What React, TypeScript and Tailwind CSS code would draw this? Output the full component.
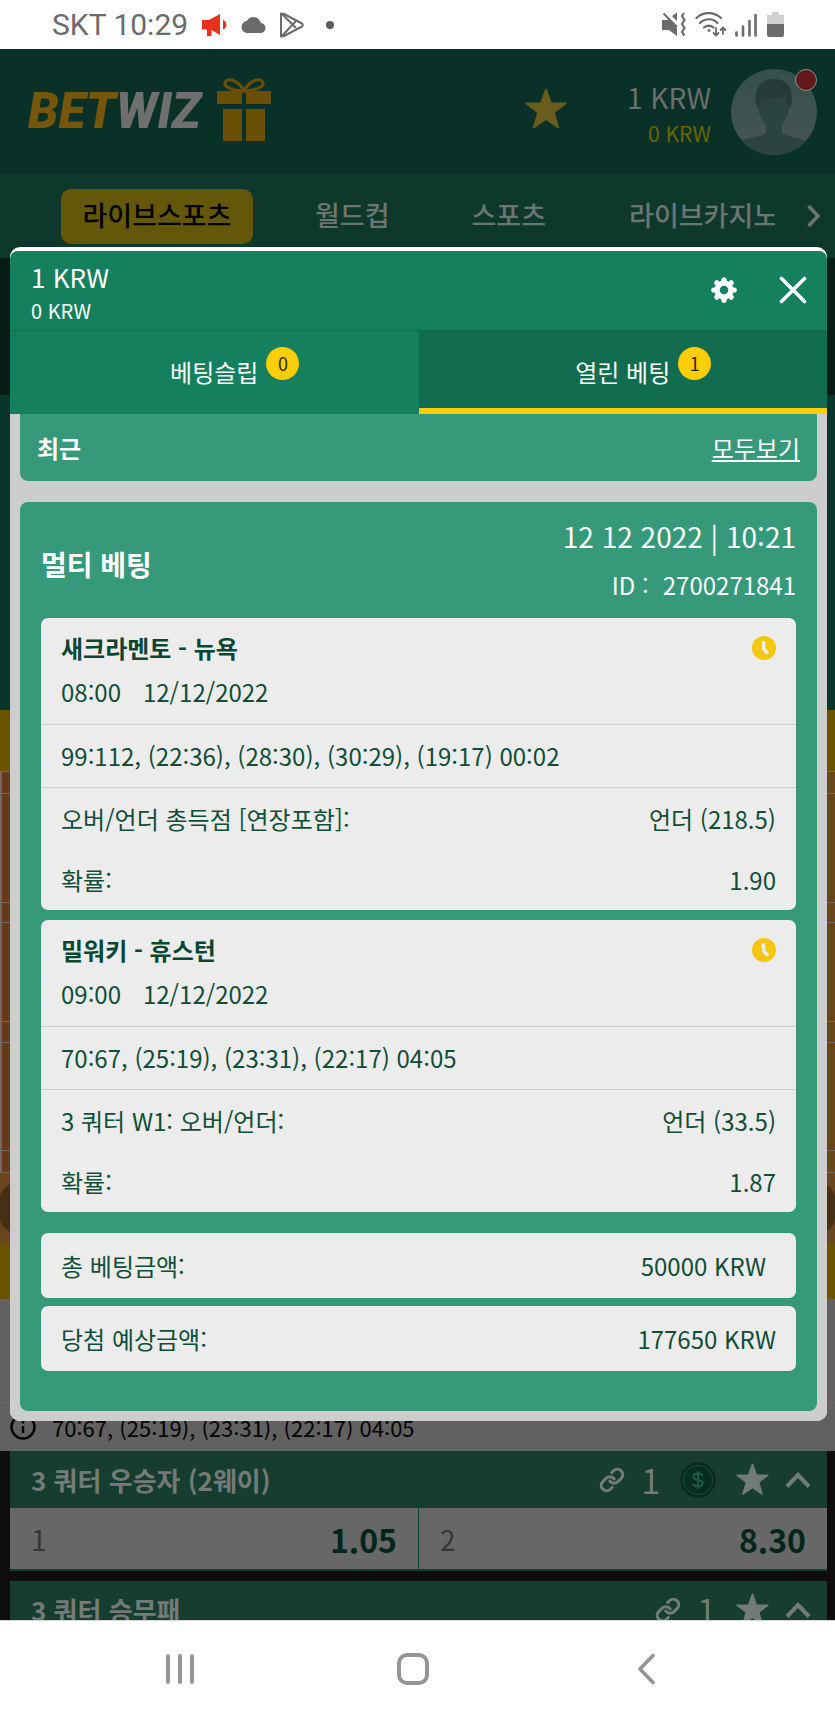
import { useState } from 'react';
import { MdCloud } from 'react-icons/md';
import { Link } from 'lucide-react';

interface Leg {
  id: string;
  teams: string;
  time: string;
  date: string;
  score: string;
  market: string;
  pick: string;
  odds: string;
}

const LEGS: Leg[] = [
  {
    id: 'sac-nyk',
    teams: '새크라멘토 - 뉴욕',
    time: '08:00',
    date: '12/12/2022',
    score: '99:112, (22:36), (28:30), (30:29), (19:17) 00:02',
    market: '오버/언더 총득점 [연장포함]:',
    pick: '언더 (218.5)',
    odds: '1.90',
  },
  {
    id: 'mil-hou',
    teams: '밀워키 - 휴스턴',
    time: '09:00',
    date: '12/12/2022',
    score: '70:67, (25:19), (23:31), (22:17) 04:05',
    market: '3 쿼터 W1: 오버/언더:',
    pick: '언더 (33.5)',
    odds: '1.87',
  },
];

const COURT_ROWS = ['h-[22px]', 'h-[109px]', 'h-5', 'h-[99px]', 'h-[21px]', 'h-[108px]', 'h-[22px]'];

function StarIcon({ className }: { className?: string }) {
  return (
    <svg viewBox="0 0 24 24" className={className} fill="currentColor" stroke="currentColor" strokeWidth="1" strokeLinejoin="round">
      <path d="M12 .8l2.8 8h8.500l-6.800 5.200 2.500 8.600L12 17.700 5 22.600 7.500 14 .7 8.800h8.500z" />
    </svg>
  );
}

function GearIcon() {
  return (
    <svg viewBox="0 0 26 26" className="w-[26px] h-[26px]" fill="none" stroke="currentColor">
      <circle cx="13" cy="13" r="7" strokeWidth="5.400" />
      <g strokeWidth="5.200" strokeLinecap="round">
        {[0, 45, 90, 135, 180, 225, 270, 315].map((a) => (
          <path key={a} d="M13 2.800v2" transform={`rotate(${a} 13 13)`} />
        ))}
      </g>
    </svg>
  );
}

function ClockIcon() {
  return (
    <svg viewBox="0 0 24 24" className="w-6 h-6 shrink-0">
      <circle cx="12" cy="12" r="12" fill="#f4c70d" />
      <path d="M11.500 6.500l.3 6.500 3.200 3.500" fill="none" stroke="#ececec" strokeWidth="3.600" strokeLinecap="round" strokeLinejoin="round" />
    </svg>
  );
}

function GiftIcon() {
  return (
    <svg viewBox="0 0 54 64" className="w-[54px] h-16" fill="#6a4f07">
      <path d="M0 13h25v13H0zM29 13h25v13H29zM6 31h19v32H6zM29 31h19v32H29z" />
      <g fill="none" stroke="#6a4f07" strokeWidth="3">
        <path d="M27 13C22 3 13 0 9 3c-4 4 2 9 18 10z" />
        <path d="M27 13c5-10 14-13 18-10 4 4-2 9-18 10z" />
      </g>
    </svg>
  );
}

function StatusBar() {
  return (
    <div className="h-[49px] shrink-0 bg-white flex items-center justify-between pl-[52px] pr-[51px] text-[#6b6b6b]">
      <div className="flex items-center">
        <span className="font-['Roboto',sans-serif] text-[30px] leading-8">SKT 10:29</span>
        <svg viewBox="0 0 26 24" className="ml-3.5 w-[26px] h-6" fill="#e8301c">
          <path d="M0 7h7L18 1v21L9.500 17v6H5v-6.500H0z" />
          <path d="M21 7c4.500 1 4.500 8.500 0 9.500z" />
        </svg>
        <MdCloud className="ml-3 w-[27px] h-[24px]" />
        <svg viewBox="0 0 25 26" className="ml-3 w-[25px] h-[26px]" fill="none" stroke="currentColor" strokeWidth="2" strokeLinejoin="round">
          <path d="M2 1.500v23l3-.5 18-9.500c1-.7 1-2.300 0-3L5 2z" />
          <path d="M3 2l14 14M3 24L17 9" />
        </svg>
        <span className="ml-[22px] w-2 h-2 rounded-full bg-[#5c5c5c]" />
      </div>
      <div className="flex items-center">
        <svg viewBox="0 0 25 25" className="w-[25px] h-[25px]" fill="currentColor">
          <path d="M0 8h5l2-1 8 9v8l-8-6H0z" />
          <path d="M10 4l5-3.500V9z" />
          <path d="M1.500 1.500L15 15" stroke="currentColor" strokeWidth="2" />
          <path d="M22 1l-2 3 2.500 4-2.500 4 2.500 4-2.500 4 2.500 3.500" fill="none" stroke="currentColor" strokeWidth="2.200" />
        </svg>
        <svg viewBox="0 0 32 25" className="ml-2 w-8 h-[25px]" fill="none" stroke="currentColor" strokeWidth="2.200" strokeLinecap="round">
          <path d="M1.500 6C8-.5 19-.5 26 6M5 11c5-5 13-5 17.500 0M9 15.500c3-2.500 6.500-2.500 9.500 0" />
          <circle cx="14" cy="18.500" r="1" fill="currentColor" strokeWidth="1" />
          <path d="M21 16v7M18.500 21l2.500 2.500 2.500-2.500M28 22v-6M25.500 18l2.500-2.500 2.500 2.500" strokeWidth="1.800" />
        </svg>
        <svg viewBox="0 0 22 24" className="ml-2 w-[22px] h-6" fill="none" stroke="currentColor" strokeWidth="2.600" strokeLinecap="round">
          <path d="M1.500 19.500v3M8 13.500v9M14.500 8v14.500M20.500 2v20.500" />
        </svg>
        <svg viewBox="0 0 17 25" className="ml-2.5 w-[17px] h-[25px]">
          <path d="M5 0h7v3H17v10H0V3h5z" fill="#d0d0d0" />
          <path d="M0 12h17v11a2 2 0 0 1-2 2H2a2 2 0 0 1-2-2z" fill="#6b6b6b" />
        </svg>
      </div>
    </div>
  );
}

function SiteHeader() {
  return (
    <header className="h-[125px] shrink-0 bg-[#0a3127] flex items-center justify-between pl-7 pr-[18px]">
      <div className="flex items-center">
        <a href="#home" className="font-['Roboto',sans-serif] font-black italic text-[49px] leading-[48px] text-[#76560b]">
          BET<span className="text-[#6f6f6f]">WIZ</span>
        </a>
        <a href="#gifts" aria-label="Gifts" className="ml-4 pb-1"><GiftIcon /></a>
      </div>
      <div className="flex items-center">
        <button aria-label="Favourites" className="mr-[60px] pb-1.5 text-[#6a5c1d]">
          <StarIcon className="w-[42px] h-[42px]" />
        </button>
        <div className="pt-1 text-right">
          <p className="text-[28px] leading-[38px] text-[#6b6f6d]">1 KRW</p>
          <p className="text-[21px] leading-[34px] text-[#6b6400]">0 KRW</p>
        </div>
        <button aria-label="Account" className="relative ml-5">
          <svg viewBox="0 0 86 86" className="w-[86px] h-[86px]">
            <defs>
              <linearGradient id="avatarBg" x1="0" y1="0" x2="0" y2="1">
                <stop offset="0" stopColor="#35504c" />
                <stop offset="1" stopColor="#475553" />
              </linearGradient>
              <clipPath id="avatarClip"><circle cx="43" cy="43" r="43" /></clipPath>
            </defs>
            <g clipPath="url(#avatarClip)">
              <rect width="86" height="86" fill="url(#avatarBg)" />
              <path d="M28 25h30l1 12c-1 8-5 14-8 19v8c6 5 18 4 26 9v13H8V73c8-5 21-4 27-9v-8c-4-5-8-11-8-19z" fill="#2c4441" />
              <path d="M25 36c-2-15 3-26 18-26s20 11 17 27l-3 2c0-5-1-9-3-12-7 2-15 2-22 0-3 3-4 7-4 12z" fill="#263a37" />
            </g>
          </svg>
          <span className="absolute top-0 right-0 w-[22px] h-[22px] rounded-full bg-[#64191b] border border-[#8b8f8d]" />
        </button>
      </div>
    </header>
  );
}

function SiteNav() {
  return (
    <nav className="h-[84px] shrink-0 bg-[#0e382b] flex items-center pl-[61px] pr-3 text-[27px] font-medium leading-[51px] text-[#6c7571]">
      <a href="#live" className="w-48 shrink-0 pb-1 text-center rounded-[10px] bg-[#65570a] text-black">라이브스포츠</a>
      <a href="#worldcup" className="ml-[62px] pb-1 shrink-0">월드컵</a>
      <a href="#sports" className="ml-[82px] pb-1 shrink-0">스포츠</a>
      <a href="#casino" className="ml-[83px] mr-[30px] pb-1 flex-1 min-w-0 overflow-hidden whitespace-nowrap">라이브카지노</a>
      <button aria-label="Next">
        <svg viewBox="0 0 18 24" className="w-[18px] h-6" fill="none" stroke="currentColor" strokeWidth="3.600">
          <path d="M3.500 2L13 12 3.500 22" />
        </svg>
      </button>
    </nav>
  );
}

function CourtView() {
  return (
    <>
      <div className="h-[137px] shrink-0 bg-[#051d15]" />
      <div className="h-[315px] shrink-0 bg-[#09352a]" />
      <div className="h-[61px] shrink-0 bg-[#6a5400]" />
      <div className="shrink-0 border-t border-l-2 border-[#75695e] bg-linear-to-r from-[#673919] to-[#694619]">
        {COURT_ROWS.map((h, i) => (
          <div key={i} className={`${h} border-b border-[#75695e]`} />
        ))}
      </div>
      <div className="h-[70px] shrink-0 bg-[#69461d] flex items-center">
        <div className="w-full h-[50px] rounded-2xl bg-[#463015]" />
      </div>
      <div className="h-14 shrink-0 bg-[#6a5400]" />
      <div className="h-[104px] shrink-0 bg-[#616161] border-b border-[#6b6b6b]" />
      <div className="h-12 shrink-0 bg-[#616161] flex items-center gap-4 pl-2.5 text-[22px] leading-8 text-black">
        <svg viewBox="0 0 26 26" className="w-[26px] h-[26px]" fill="none" stroke="currentColor" strokeWidth="2.400">
          <circle cx="13" cy="13" r="11.500" />
          <path d="M13 12v7M13 7v2.500" />
        </svg>
        <span>70:67, (25:19), (23:31), (22:17) 04:05</span>
      </div>
    </>
  );
}

function MarketHeader({ title, cashout }: { title: string; cashout?: boolean }) {
  return (
    <div className="h-[57px] shrink-0 bg-[#173d30] flex items-center pl-[21px] pr-4 text-[#737b78]">
      <h3 className="flex-1 text-[26px] font-bold leading-10">{title}</h3>
      <Link className="w-[26px] h-[26px]" strokeWidth={2.8} />
      <span className="ml-4 text-[34px] leading-10">1</span>
      {cashout && (
        <svg viewBox="0 0 36 36" className="ml-5 w-9 h-9">
          <circle cx="18" cy="18" r="17" fill="#062d21" stroke="#0a2a20" strokeWidth="1.500" />
          <circle cx="18" cy="18" r="14.500" fill="none" stroke="#1b4a3b" strokeWidth="1" />
          <path d="M22.500 14c-.8-2-2.500-2.500-4.500-2.500-2.500 0-4.500 1-4.500 3.200 0 4.800 9.200 2 9.200 6.600 0 2.200-2 3.200-4.700 3.200-2.300 0-4.200-.8-4.800-2.800M18 9v18" fill="none" stroke="#1f5a48" strokeWidth="2" />
        </svg>
      )}
      <button aria-label="Add to favourites" className="ml-5">
        <StarIcon className="w-[33px] h-[33px]" />
      </button>
      <button aria-label="Collapse" className="ml-4">
        <svg viewBox="0 0 26 18" className="w-[26px] h-[18px]" fill="none" stroke="currentColor" strokeWidth="4">
          <path d="M2 15.500L13 4l11 11.500" />
        </svg>
      </button>
    </div>
  );
}

function OddsButton({ name, value }: { name: string; value: string }) {
  return (
    <button className="flex-1 h-[61px] bg-[#676767] flex items-center justify-between px-[21px]">
      <span className="text-[28px] leading-10 text-[#363636]">{name}</span>
      <span className="text-[32px] font-bold leading-10 text-[#03251a]">{value}</span>
    </button>
  );
}

function Markets() {
  return (
    <section className="bg-[#0f0d0e] pl-2.5 pr-2 flex flex-col gap-2.5">
      <div>
        <MarketHeader title="3 쿼터 우승자 (2웨이)" cashout />
        <div className="flex gap-px bg-[#0f4232] pb-0.5">
          <OddsButton name="1" value="1.05" />
          <OddsButton name="2" value="8.30" />
        </div>
      </div>
      <MarketHeader title="3 쿼터 승무패" />
    </section>
  );
}

interface TabProps {
  label: string;
  count: number;
  active: boolean;
  onClick: () => void;
}

function SlipTab({ label, count, active, onClick }: TabProps) {
  return (
    <button
      role="tab"
      aria-selected={active}
      onClick={onClick}
      className={`flex-1 h-[83px] border-b-[6px] flex items-start justify-center pt-4 text-2xl leading-[50px] ${
        active ? 'bg-[#126c4f] border-[#fdce07]' : 'bg-[#15805d] border-[#15805d]'
      }`}
    >
      <span className="relative">
        {label}
        <span className="absolute top-0 left-full ml-2 w-[33px] h-[33px] rounded-full bg-[#fdce07] text-[#2d2400] text-lg leading-8">
          {count}
        </span>
      </span>
    </button>
  );
}

function LegCard({ leg }: { leg: Leg }) {
  return (
    <article className="rounded-[7px] bg-[#ececec] text-2xl text-[#104e37]">
      <div className="pt-2 pb-2.5 px-5 border-b border-[#cbcbcb] leading-[44px]">
        <div className="flex items-center justify-between">
          <h3 className="font-bold text-[#0a4630]">{leg.teams}</h3>
          <ClockIcon />
        </div>
        <p className="flex gap-[22px]">
          <span>{leg.time}</span>
          <span>{leg.date}</span>
        </p>
      </div>
      <p className="px-5 border-b border-[#cbcbcb] leading-[62px]">{leg.score}</p>
      <dl className="px-5 leading-[61px]">
        <div className="flex justify-between">
          <dt>{leg.market}</dt>
          <dd>{leg.pick}</dd>
        </div>
        <div className="flex justify-between">
          <dt>확률:</dt>
          <dd>{leg.odds}</dd>
        </div>
      </dl>
    </article>
  );
}

function BetPanel({ onClose }: { onClose: () => void }) {
  const [tab, setTab] = useState<'slip' | 'open'>('open');

  return (
    <div role="dialog" aria-label="열린 베팅" className="absolute top-[198px] left-2.5 right-2 rounded-[10px] overflow-hidden bg-white pt-1">
      <div className="rounded-t-lg bg-[#15805d] text-white border-b border-[#106b4d] h-20 flex items-center pl-[21px] pr-5">
        <div className="flex-1 pt-1">
          <p className="text-[26px] leading-9">1 KRW</p>
          <p className="text-xl leading-8">0 KRW</p>
        </div>
        <div className="flex items-center gap-[42px] pb-0.5">
          <button aria-label="Settings"><GearIcon /></button>
          <button aria-label="Close" onClick={onClose}>
            <svg viewBox="0 0 28 28" className="w-7 h-7" stroke="currentColor" strokeWidth="3.600" strokeLinecap="round">
              <path d="M2.500 2.500l23 23M25.500 2.500l-23 23" />
            </svg>
          </button>
        </div>
      </div>
      <div role="tablist" className="flex text-white">
        <SlipTab label="베팅슬립" count={0} active={tab === 'slip'} onClick={() => setTab('slip')} />
        <SlipTab label="열린 베팅" count={1} active={tab === 'open'} onClick={() => setTab('open')} />
      </div>

      <div className="bg-[#cdcdcd] px-2.5 pb-2.5">
        <div className="h-[67px] rounded-b-lg bg-[#35997a] text-white text-2xl flex items-center justify-between px-[17px]">
          <h2 className="font-bold">최근</h2>
          <a href="#all" className="underline">모두보기</a>
        </div>

        <section className="mt-[21px] rounded-lg bg-[#35997a] px-[21px] pb-10">
          <div className="h-[116px] flex items-center justify-between text-white">
            <h2 className="pt-2 text-[28px] font-bold leading-10">멀티 베팅</h2>
            <div className="text-right">
              <p className="text-[28px] leading-[50px]">12 12 2022 | 10:21</p>
              <p className="flex justify-end gap-3.5 text-2xl leading-[48px]">
                <span>ID :</span>
                <span>2700271841</span>
              </p>
            </div>
          </div>
          <div className="flex flex-col gap-2.5">
            {LEGS.map((leg) => (
              <LegCard key={leg.id} leg={leg} />
            ))}
          </div>
          <dl className="mt-[21px] flex flex-col gap-2 text-2xl leading-[65px] text-[#104e37]">
            <div className="rounded-[7px] bg-[#ececec] flex justify-between pl-5 pr-[30px]">
              <dt>총 베팅금액:</dt>
              <dd>50000 KRW</dd>
            </div>
            <div className="rounded-[7px] bg-[#ececec] flex justify-between px-5">
              <dt>당첨 예상금액:</dt>
              <dd>177650 KRW</dd>
            </div>
          </dl>
        </section>
      </div>
    </div>
  );
}

function SystemNav() {
  return (
    <div className="h-[97px] shrink-0 bg-white border-t border-[#d8d8d8] grid grid-cols-3 items-center justify-items-center pl-[63px] pr-[72px] text-[#959595]">
      <button aria-label="Recents">
        <svg viewBox="0 0 30 32" className="w-[30px] h-8" stroke="currentColor" strokeWidth="4" strokeLinecap="round">
          <path d="M3 3v26M15 3v26M27 3v26" />
        </svg>
      </button>
      <button aria-label="Home">
        <svg viewBox="0 0 34 34" className="w-[34px] h-[34px]" fill="none" stroke="currentColor" strokeWidth="4">
          <rect x="3" y="3" width="28" height="28" rx="8" />
        </svg>
      </button>
      <button aria-label="Back">
        <svg viewBox="0 0 18 32" className="w-[18px] h-8" fill="none" stroke="currentColor" strokeWidth="3.600" strokeLinecap="round" strokeLinejoin="round">
          <path d="M16 2.500L3 16l13 13.500" />
        </svg>
      </button>
    </div>
  );
}

export default function App() {
  const [open, setOpen] = useState(true);

  return (
    <div lang="ko" className="h-screen flex flex-col overflow-hidden font-['Noto_Sans_CJK_KR',sans-serif]">
      <StatusBar />
      <main className="relative flex-1 min-h-0 overflow-hidden flex flex-col bg-[#0f0d0e]">
        <SiteHeader />
        <SiteNav />
        <CourtView />
        <Markets />
        {open && <BetPanel onClose={() => setOpen(false)} />}
      </main>
      <SystemNav />
    </div>
  );
}
